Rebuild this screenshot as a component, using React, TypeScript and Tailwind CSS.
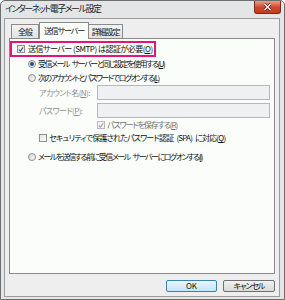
import React from 'react';

const font = "[font-family:'Noto_Sans_CJK_JP','Noto_Sans',sans-serif] [font-feature-settings:'palt']";

function Key({ k }: { k: string }) {
    return <span className="underline underline-offset-1">{k}</span>;
}

function Gap() {
    return <span className="inline-block w-[3px]" />;
}

function CheckBox({ checked, disabled }: { checked?: boolean; disabled?: boolean }) {
    return (
        <span className={`w-[8px] h-[8px] shrink-0 border flex items-center justify-center ${disabled ? 'border-[#b8b8b8] bg-[#f4f4f4]' : 'border-[#8f8f8f] bg-gradient-to-br from-[#e4e4e4] to-[#fbfbfb]'}`}>
            {checked && (
                <svg width="7" height="7" viewBox="0 0 7 7">
                    <path d="M1 3.6 L2.8 5.4 L6 1" fill="none" stroke={disabled ? '#a0a0a0' : '#2a4f8c'} strokeWidth="1.3" />
                </svg>
            )}
        </span>
    );
}

function Radio({ checked }: { checked?: boolean }) {
    return (
        <span className="w-[8px] h-[8px] shrink-0 rounded-full border border-[#8e8f8f] bg-gradient-to-br from-[#d6d6d6] to-[#fafafa] flex items-center justify-center">
            {checked && <span className="w-[4px] h-[4px] rounded-full bg-[#1f4e8e]" />}
        </span>
    );
}

export default function App() {
    return (
        <div className={`w-[285px] h-[300px] flex flex-col bg-[#e4e5e6] border border-[#6e6e6e] rounded-t-[5px] overflow-hidden text-[8px] leading-none whitespace-nowrap tracking-[-1.1px] text-[#111] ${font}`}>
            {/* title bar */}
            <div className="h-[17px] shrink-0 flex items-start justify-between">
                <span className="pl-[4px] pt-[3px] text-[9px] tracking-[-1.5px] text-[#222]">インターネット電子メール設定</span>
                <div className="mr-[3px] w-[27px] h-[13px] rounded-b-[3px] border border-t-0 border-[#7a2a1c] bg-gradient-to-b from-[#e9a08a] via-[#cf4a2c] to-[#c8391d] flex items-center justify-center">
                    <svg width="9" height="8" viewBox="0 0 9 8">
                        <path d="M1.5 1 L7.5 7 M7.5 1 L1.5 7" stroke="#3b1a14" strokeWidth="2.6" />
                        <path d="M1.5 1 L7.5 7 M7.5 1 L1.5 7" stroke="#ffffff" strokeWidth="1.4" />
                    </svg>
                </div>
            </div>

            {/* client area */}
            <div className="flex-1 ml-[3px] mr-[4px] mb-[2px] bg-[#eeeeee] border border-[#9c9c9c] flex flex-col">
                {/* tabs */}
                <div className="h-[19px] shrink-0 flex items-end pl-[6px]">
                    <div className="h-[14px] w-[28px] border border-b-0 border-[#8a8a8a] bg-gradient-to-b from-[#f2f2f2] to-[#e2e2e2] flex items-center justify-center">全般</div>
                    <div className="h-[17px] w-[50px] -mb-px relative z-10 border border-b-0 border-[#8a8a8a] bg-[#fbfdfb] flex items-center justify-center">送信サーバー</div>
                    <div className="h-[14px] w-[34px] border border-b-0 border-l-0 border-[#8a8a8a] bg-gradient-to-b from-[#f2f2f2] to-[#e2e2e2] flex items-center justify-center">詳細設定</div>
                </div>

                {/* panel */}
                <div className="ml-[4px] mr-[4px] h-[236px] shrink-0 bg-[#fbfdfb] border border-[#8a8a8a] flex flex-col">
                    <div className="mt-[2px] w-[146px] h-[16px] border-2 border-[#e4147c] flex items-center gap-[3px] pl-[5px]">
                        <CheckBox checked />
                        <span className="tracking-[-0.5px]">送信サーバー (SMTP) は認証が必要(<Key k="O" />)</span>
                    </div>

                    <div className="h-[14px] flex items-center gap-[2px] pl-[18px]">
                        <Radio checked />
                        <span className="tracking-[-1.5px]">受信メール<Gap />サーバーと同じ設定を使用する(<Key k="U" />)</span>
                    </div>
                    <div className="h-[14px] flex items-center gap-[2px] pl-[18px]">
                        <Radio />
                        <span className="tracking-[-1.5px]">次のアカウントとパスワードでログオンする(<Key k="L" />)</span>
                    </div>

                    <div className="h-[15px] flex items-center pl-[29px] text-[#8d8d8d]">
                        <span className="w-[58px] shrink-0 tracking-[-0.6px]">アカウント名(<Key k="N" />):</span>
                        <div className="w-[173px] h-[15px] border border-[#b4b8bc] bg-[#eef0f2]" />
                    </div>
                    <div className="mt-[3px] h-[15px] flex items-center pl-[29px] text-[#8d8d8d]">
                        <span className="w-[58px] shrink-0 tracking-[-0.6px]">パスワード(<Key k="P" />):</span>
                        <div className="w-[173px] h-[15px] border border-[#b4b8bc] bg-[#eef0f2]" />
                    </div>

                    <div className="h-[14px] flex items-center gap-[2px] pl-[87px] text-[#6d6d6d]">
                        <CheckBox checked disabled />
                        <span>パスワードを保存する(<Key k="R" />)</span>
                    </div>
                    <div className="h-[12px] flex items-center gap-[2px] pl-[29px]">
                        <CheckBox />
                        <span className="tracking-[-0.8px]">セキュリティで保護されたパスワード認証<Gap />(SPA)<Gap />に対応(<Key k="Q" />)</span>
                    </div>

                    <div className="mt-[6px] h-[14px] flex items-center gap-[2px] pl-[18px]">
                        <Radio />
                        <span className="tracking-[-1.5px]">メールを送信する前に受信メール<Gap />サーバーにログオンする(<Key k="I" />)</span>
                    </div>
                </div>

                {/* buttons */}
                <div className="mt-[6px] flex justify-end gap-[6px] pr-[4px]">
                    <button className="w-[51px] h-[12px] rounded-[2px] border border-[#3c7fb1] bg-gradient-to-b from-[#eaf6fd] to-[#bee6fd] flex items-center justify-center tracking-normal">OK</button>
                    <button className="w-[52px] h-[12px] rounded-[2px] border border-[#707070] bg-gradient-to-b from-[#f2f2f2] to-[#d8d8d8] flex items-center justify-center">キャンセル</button>
                </div>
            </div>
        </div>
    );
}
